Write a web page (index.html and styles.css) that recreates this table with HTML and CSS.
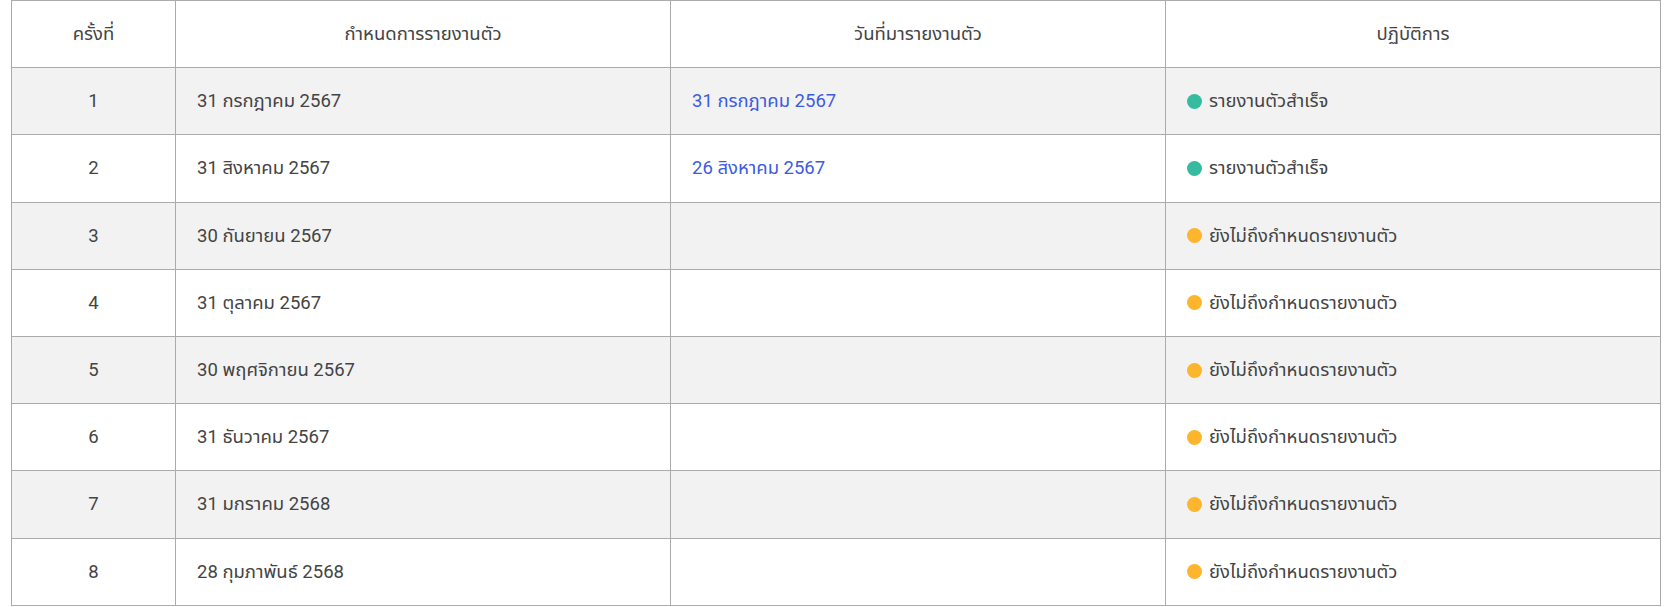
FILE: index.html
```html
<!DOCTYPE html>
<html lang="th">
<head>
<meta charset="utf-8">
<link rel="stylesheet" href="styles.css">
</head>
<body>
<table class="report">
  <colgroup>
    <col class="c-no"><col class="c-due"><col class="c-date"><col class="c-act">
  </colgroup>
  <thead>
    <tr><th>ครั้งที่</th><th>กำหนดการรายงานตัว</th><th>วันที่มารายงานตัว</th><th>ปฏิบัติการ</th></tr>
  </thead>
  <tbody>
    <tr><td class="no">1</td><td>31 กรกฎาคม 2567</td><td class="link">31 กรกฎาคม 2567</td><td><span class="status"><span class="dot ok"></span>รายงานตัวสำเร็จ</span></td></tr>
    <tr><td class="no">2</td><td>31 สิงหาคม 2567</td><td class="link">26 สิงหาคม 2567</td><td><span class="status"><span class="dot ok"></span>รายงานตัวสำเร็จ</span></td></tr>
    <tr><td class="no">3</td><td>30 กันยายน 2567</td><td></td><td><span class="status"><span class="dot wait"></span>ยังไม่ถึงกำหนดรายงานตัว</span></td></tr>
    <tr><td class="no">4</td><td>31 ตุลาคม 2567</td><td></td><td><span class="status"><span class="dot wait"></span>ยังไม่ถึงกำหนดรายงานตัว</span></td></tr>
    <tr><td class="no">5</td><td>30 พฤศจิกายน 2567</td><td></td><td><span class="status"><span class="dot wait"></span>ยังไม่ถึงกำหนดรายงานตัว</span></td></tr>
    <tr><td class="no">6</td><td>31 ธันวาคม 2567</td><td></td><td><span class="status"><span class="dot wait"></span>ยังไม่ถึงกำหนดรายงานตัว</span></td></tr>
    <tr><td class="no">7</td><td>31 มกราคม 2568</td><td></td><td><span class="status"><span class="dot wait"></span>ยังไม่ถึงกำหนดรายงานตัว</span></td></tr>
    <tr><td class="no">8</td><td>28 กุมภาพันธ์ 2568</td><td></td><td><span class="status"><span class="dot wait"></span>ยังไม่ถึงกำหนดรายงานตัว</span></td></tr>
  </tbody>
</table>
</body>
</html>
```
FILE: styles.css
```css
html, body {
  margin: 0;
  padding: 0;
  background: #ffffff;
}
body {
  padding-left: 11px;
  font-family: Roboto, "Noto Sans Thai", "Noto Sans", "DejaVu Sans", sans-serif;
  font-size: 18.5px;
  color: #444444;
}
.report {
  border-collapse: collapse;
  width: 1650px;
  table-layout: fixed;
}
.c-no { width: 164px; }
.c-due, .c-date, .c-act { width: 495px; }
.report th, .report td {
  border: 1px solid #ababab;
  height: 67.2px;
  padding: 0 21px;
  box-sizing: border-box;
  vertical-align: middle;
  white-space: nowrap;
}
.report th {
  font-weight: 400;
  text-align: center;
}
.report tbody tr:nth-child(odd) td {
  background: #f2f2f2;
}
.report td.no {
  text-align: center;
}
.report td.link {
  color: #3d5be0;
}
.status {
  display: inline-flex;
  align-items: center;
  gap: 7px;
}
.dot {
  width: 15px;
  height: 15px;
  border-radius: 50%;
  display: inline-block;
  flex: none;
}
.dot.ok { background: #35bca0; }
.dot.wait { background: #fcb52c; }
```
